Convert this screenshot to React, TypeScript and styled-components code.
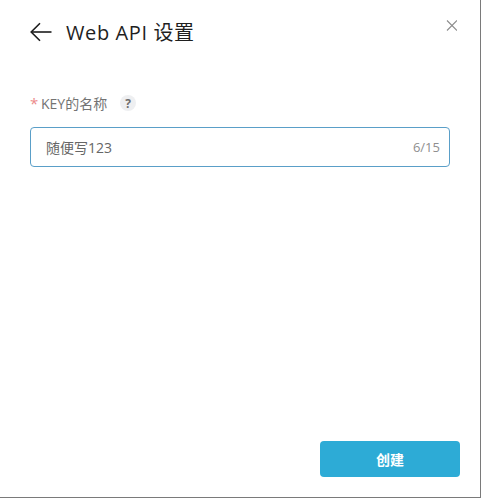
import React from "react";
import styled, { createGlobalStyle } from "styled-components";

const GlobalStyle = createGlobalStyle`
  html, body {
    margin: 0;
    padding: 0;
    background: #ffffff;
  }
  * {
    box-sizing: border-box;
  }
`;

export default function App() {
  return (
    <>
      <GlobalStyle />
      <Dialog>
        <Header>
          <BackButton aria-label="返回">
            <svg width="22" height="20" viewBox="0 0 22 20" fill="none" stroke="#1c1c1c" strokeWidth="1.6">
              <path d="M21.5 10H1.5" />
              <path d="M10 1.2L1.2 10L10 18.8" />
            </svg>
          </BackButton>
          <Title>Web API 设置</Title>
          <CloseButton aria-label="关闭">
            <svg width="11" height="11" viewBox="0 0 11 11" fill="none" stroke="#8c8c8c" strokeWidth="1.1">
              <path d="M1 0.5L11 10.5M11 0.5L1 10.5" />
            </svg>
          </CloseButton>
        </Header>
        <Body>
          <Label>
            <Star>*</Star>
            <span>KEY的名称</span>
            <Help>?</Help>
          </Label>
          <InputBox>
            <InputText>随便写123</InputText>
            <Counter>6/15</Counter>
          </InputBox>
        </Body>
        <Footer>
          <Submit>创建</Submit>
        </Footer>
      </Dialog>
    </>
  );
}

const Dialog = styled.div`
  width: 481px;
  height: 498px;
  display: flex;
  flex-direction: column;
  background: #ffffff;
  border-right: 1px solid #7a7a7a;
  border-bottom: 1px solid #7a7a7a;
  font-family: "Open Sans", "Noto Sans CJK SC", sans-serif;
`;

const Header = styled.div`
  height: 64px;
  padding: 0 23px 0 30px;
  display: flex;
  align-items: center;
`;

const BackButton = styled.div`
  width: 36px;
  height: 20px;
  display: flex;
  align-items: center;
`;

const Title = styled.h1`
  flex: 1;
  margin: 2px 0 0;
  font-size: 20px;
  font-weight: 400;
  line-height: 28px;
  color: #1f1f1f;
  letter-spacing: 0.6px;
`;

const CloseButton = styled.div`
  align-self: flex-start;
  margin-top: 20px;
  width: 11px;
  height: 11px;
  display: flex;
`;

const Body = styled.div`
  flex: 1;
  padding: 28px 31px 0 30px;
`;

const Label = styled.div`
  height: 22px;
  display: flex;
  align-items: center;
  font-size: 14px;
  color: #737373;
`;

const Star = styled.span`
  width: 11px;
  color: #ec8a8a;
  font-size: 15px;
`;

const Help = styled.span`
  width: 16px;
  height: 16px;
  margin-left: 13px;
  border-radius: 50%;
  background: #eeeff1;
  color: #6e6e6e;
  font-size: 12px;
  font-weight: 700;
  display: flex;
  align-items: center;
  justify-content: center;
`;

const InputBox = styled.div`
  width: 420px;
  height: 40px;
  margin-top: 13px;
  padding: 0 9px 0 15px;
  border: 1px solid #5a9fc8;
  border-radius: 4px;
  display: flex;
  align-items: center;
  justify-content: space-between;
`;

const InputText = styled.span`
  font-size: 14px;
  color: #666666;
`;

const Counter = styled.span`
  font-size: 13px;
  color: #8f8f8f;
`;

const Footer = styled.div`
  padding: 0 20px 20px 0;
  display: flex;
  justify-content: flex-end;
`;

const Submit = styled.button`
  width: 140px;
  height: 36px;
  border: none;
  border-radius: 4px;
  background: #2dabd6;
  color: #ffffff;
  font-family: inherit;
  font-size: 14px;
  font-weight: 700;
`;
